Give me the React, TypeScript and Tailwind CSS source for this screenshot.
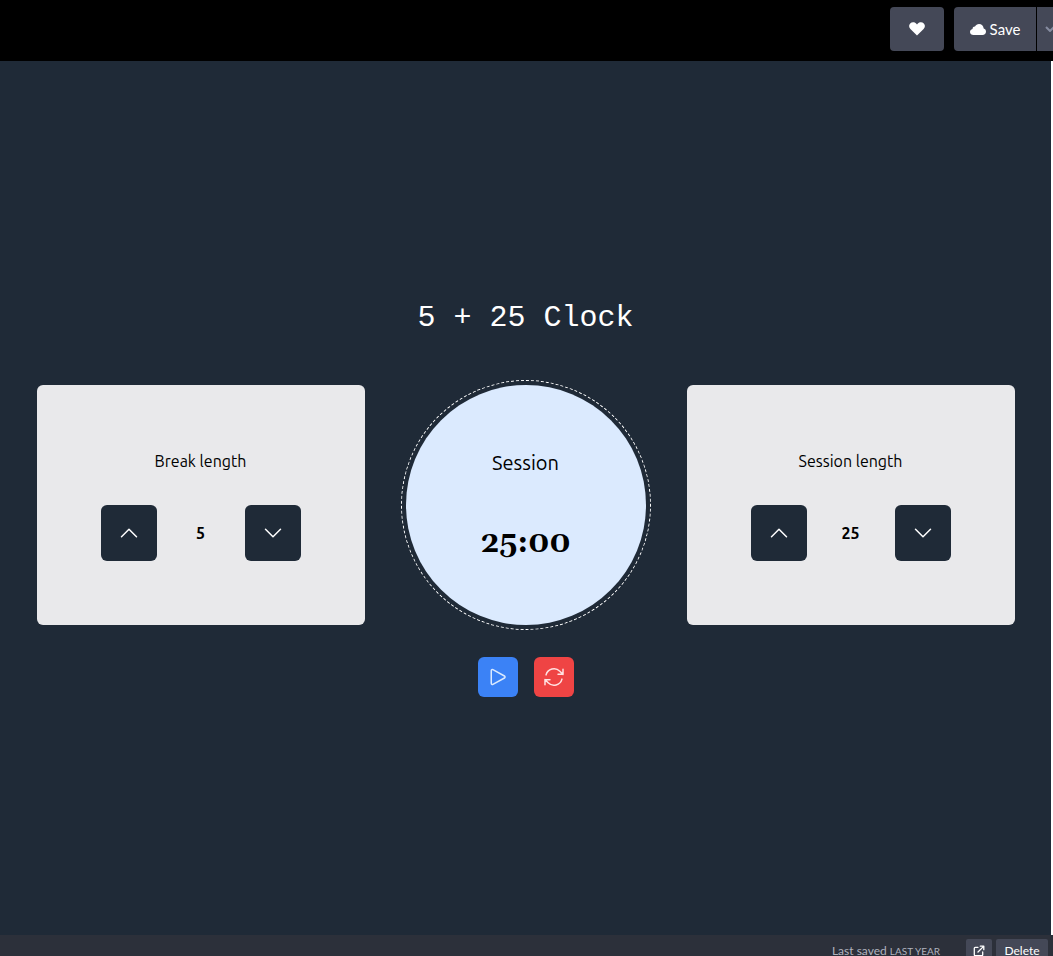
import { useEffect, useState } from "react";
import {
  HiOutlineArrowPath,
  HiOutlineChevronDown,
  HiOutlineChevronUp,
  HiOutlinePlay,
} from "react-icons/hi2";

function HeartIcon() {
  return (
    <svg viewBox="0 0 16 14" className="h-3.5 w-4 fill-white" aria-hidden="true">
      <path d="M8 13.4 1.4 7C-.3 5.300-.3 2.800 1.200 1.400 3 -.2 6.200 0 8 2.400 9.800 0 13 -.2 14.800 1.400c1.500 1.400 1.500 3.900-.2 5.600L8 13.400Z" />
    </svg>
  );
}

function CloudIcon() {
  return (
    <svg viewBox="0 0 16 11" className="h-[11px] w-4 fill-white" aria-hidden="true">
      <path d="M3.500 11C1.500 11 0 9.700 0 7.900c0-1.500 1-2.700 2.500-3C2.700 3.300 3.800 2.500 5 2.600 5.800 1 7.300 0 9 0c2.600 0 4.500 1.900 4.700 4.500C15.100 4.900 16 6.100 16 7.500 16 9.500 14.500 11 12.500 11h-9Z" />
    </svg>
  );
}

function ExternalIcon() {
  return (
    <svg
      viewBox="0 0 12 12"
      className="size-3 fill-none stroke-white stroke-[1.3]"
      strokeLinecap="round"
      strokeLinejoin="round"
      aria-hidden="true"
    >
      <path d="M5 2.300H2.200Q1.300 2.300 1.300 3.200V9.800Q1.300 10.700 2.200 10.700H8.800Q9.700 10.700 9.700 9.800V7M7.300 1.200h3.500v3.500M10.600 1.400 5 7" />
    </svg>
  );
}

type LengthCardProps = {
  label: string;
  value: number;
  onChange: (value: number) => void;
};

function LengthCard({ label, value, onChange }: LengthCardProps) {
  const step =
    "flex size-14 items-center justify-center rounded-md bg-[#1f2a37] text-white";
  return (
    <section className="flex h-60 min-w-0 flex-col items-center justify-center gap-8 rounded-md bg-[#e9e9eb] text-black">
      <h2 className="text-base">{label}</h2>
      <div className="flex items-center">
        <button
          type="button"
          className={step}
          aria-label={`Increase ${label}`}
          onClick={() => onChange(Math.min(60, value + 1))}
        >
          <HiOutlineChevronUp className="size-6" />
        </button>
        <span className="w-22 text-center font-bold">{value}</span>
        <button
          type="button"
          className={step}
          aria-label={`Decrease ${label}`}
          onClick={() => onChange(Math.max(1, value - 1))}
        >
          <HiOutlineChevronDown className="size-6" />
        </button>
      </div>
    </section>
  );
}

export default function App() {
  const [breakLength, setBreakLength] = useState(5);
  const [sessionLength, setSessionLength] = useState(25);
  const [seconds, setSeconds] = useState(25 * 60);
  const [onBreak, setOnBreak] = useState(false);
  const [running, setRunning] = useState(false);

  useEffect(() => {
    if (!running) return;
    const timer = setTimeout(() => {
      if (seconds > 0) {
        setSeconds(seconds - 1);
      } else {
        setSeconds((onBreak ? sessionLength : breakLength) * 60);
        setOnBreak(!onBreak);
      }
    }, 1000);
    return () => clearTimeout(timer);
  }, [running, seconds, onBreak, breakLength, sessionLength]);

  const reset = () => {
    setRunning(false);
    setOnBreak(false);
    setBreakLength(5);
    setSessionLength(25);
    setSeconds(25 * 60);
  };

  const changeSession = (value: number) => {
    setSessionLength(value);
    if (!running && !onBreak) setSeconds(value * 60);
  };

  const time = [Math.floor(seconds / 60), seconds % 60]
    .map((n) => String(n).padStart(2, "0"))
    .join(":");

  return (
    <div className="flex h-screen flex-col overflow-hidden bg-black font-['Ubuntu','Noto_Sans',sans-serif]">
      <header className="flex shrink-0 justify-end pt-[7px] pb-2.5 font-['Lato',sans-serif] text-white">
        <button
          type="button"
          aria-label="Love"
          className="mr-2.5 flex h-11 w-[54px] items-center justify-center rounded bg-[#444857]"
        >
          <HeartIcon />
        </button>
        <button
          type="button"
          className="mr-px flex h-11 w-[82px] items-center justify-center gap-1 rounded-l bg-[#444857] text-[15px]"
        >
          <CloudIcon />
          Save
        </button>
        <button
          type="button"
          aria-label="Save options"
          className="flex h-11 w-4 items-center overflow-hidden bg-[#444857] pl-2"
        >
          <svg viewBox="0 0 10 6" className="h-1.5 w-2.5 shrink-0 fill-none stroke-[#868ca0] stroke-2" aria-hidden="true">
            <path d="m1 1 4 4 4-4" />
          </svg>
        </button>
      </header>

      <main className="flex min-h-0 grow flex-col items-center justify-center border-r-2 border-white bg-[#1f2a37]">
        <h1 className="mb-[49px] font-['Liberation_Mono',monospace] text-3xl text-white">
          5 + 25 Clock
        </h1>
        <div className="grid w-full max-w-[978px] grid-cols-[1fr_auto_1fr] gap-[41px]">
          <LengthCard label="Break length" value={breakLength} onChange={setBreakLength} />
          <section className="flex size-60 flex-col items-center justify-center gap-12 rounded-full bg-blue-100 text-black outline-1 outline-offset-4 outline-white outline-dashed">
            <h2 className="text-xl">{onBreak ? "Break" : "Session"}</h2>
            <time className="font-['Georgia','Gelasio','DejaVu_Serif',serif] text-3xl font-bold">
              {time}
            </time>
          </section>
          <LengthCard label="Session length" value={sessionLength} onChange={changeSession} />
        </div>
        <div className="mt-8 flex gap-4">
          <button
            type="button"
            aria-label="Start or pause"
            onClick={() => setRunning(!running)}
            className="flex size-10 items-center justify-center rounded-md bg-[#3b82f6] text-blue-100"
          >
            <HiOutlinePlay className="size-6" />
          </button>
          <button
            type="button"
            aria-label="Reset"
            onClick={reset}
            className="flex size-10 items-center justify-center rounded-md bg-[#ef4444] text-red-100"
          >
            <HiOutlineArrowPath className="size-6" />
          </button>
        </div>
      </main>

      <footer className="flex h-[21px] shrink-0 items-start justify-end overflow-hidden bg-[#2c303a] pt-1 pr-[5px] font-['Lato',sans-serif] text-xs/6 text-white">
        <span className="mr-[26px] text-[#b0b3be]">
          Last saved <span className="text-[10px] uppercase">last year</span>
        </span>
        <button
          type="button"
          aria-label="Open in new window"
          className="mr-1 flex h-6 w-[26px] items-center justify-center rounded-xs bg-[#444857]"
        >
          <ExternalIcon />
        </button>
        <button type="button" className="h-6 w-[52px] rounded-xs bg-[#444857]">
          Delete
        </button>
      </footer>
    </div>
  );
}
